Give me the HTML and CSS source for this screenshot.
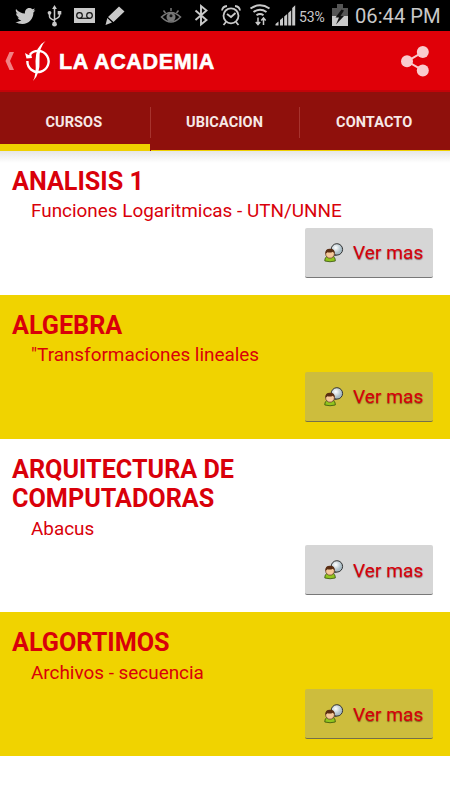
FILE: index.html
```html
<!DOCTYPE html>
<html lang="es">
<head>
  <meta charset="UTF-8">
  <meta name="viewport" content="width=device-width, initial-scale=1.0">
  <title>La Academia</title>
  <link rel="stylesheet" href="styles.css">
</head>
<body>
  <div class="status-bar">
    <div class="status-left">
      <!-- bird -->
      <svg width="21" height="31" viewBox="15 0 21 31"><path fill="#c9c9c9" d="M16 9c2.500 3 5.500 4.300 9 4.500-.6-3 1.600-5.500 4.200-5.500 1.300 0 2.300.5 3.200 1.300l2.500-.9-1.500 2.300 2-.4-2 2.200c.2 6-4.500 11.500-11 11.500-2.600 0-5-.6-7-1.900 2.200 0 4.300-.6 6-1.800-1.900-.3-3.200-1.300-3.800-2.900h1.700c-2-.7-3.200-2.200-3.200-4.200l1.700.4C16 12.500 15.300 10.800 16 9z"/></svg>
      <!-- usb -->
      <svg width="17" height="31" viewBox="46 0 17 31"><g fill="none" stroke="#c9c9c9" stroke-width="1.500"><path d="M54.500 7v17M49.500 13v3.500q0 2 5 4M59.500 13v2.500q0 2-5 4"/></g><g fill="#c9c9c9"><path d="M54.500 5l2.400 4h-4.800zM57.700 11h3.600v3.600h-3.600z"/><circle cx="49.500" cy="12.800" r="1.900"/><circle cx="54.500" cy="24.200" r="2.400"/></g></svg>
      <!-- voicemail -->
      <svg width="22" height="31" viewBox="73 0 22 31"><path fill="#c9c9c9" d="M74 8h21v15H74z"/><g fill="none" stroke="#111" stroke-width="1.200"><circle cx="79.500" cy="15.500" r="2.800"/><circle cx="89.500" cy="15.500" r="2.800"/><path d="M79.500 18.300h10"/></g></svg>
      <!-- pencil -->
      <svg width="21" height="31" viewBox="105 0 21 31"><path fill="#c9c9c9" d="M119 6.500l5.500 5-11 10.500-5.500-5zM107.300 18l4.700 4.500-6.500 2.500z"/></svg>
    </div>
    <div class="status-right">
      <!-- eye -->
      <svg width="30" height="31" viewBox="158 0 30 31"><path d="M161.500 17q9.500-9 19 0-9.500 10-19 0z" fill="none" stroke="#777" stroke-width="1.600"/><circle cx="171" cy="17" r="4.500" fill="#777"/><circle cx="171" cy="15.800" r="1.500" fill="#111"/><path d="M171 8v3M163.500 10.500l2 2.500M178.500 10.500l-2 2.500" stroke="#777" stroke-width="1.500"/></svg>
      <!-- bluetooth -->
      <svg width="27" height="31" viewBox="188 0 27 31"><path d="M195.500 10.500l11 9.500-5.500 4.500V6l5.500 4.500-11 9.500" fill="none" stroke="#c9c9c9" stroke-width="1.900"/></svg>
      <!-- alarm -->
      <svg width="31" height="31" viewBox="215 0 31 31"><g fill="none" stroke="#c9c9c9" stroke-width="1.800"><circle cx="231" cy="15.800" r="7.500"/><path d="M227 14l4 3 4.500-4M222 10.500q.5-4 5-4.500M240 10.500q-.5-4-5-4.500M226 22l-2.500 3M236 22l2.500 3"/></g></svg>
      <!-- wifi -->
      <svg width="27" height="31" viewBox="246 0 27 31"><g fill="none" stroke="#c9c9c9" stroke-width="2"><path d="M250.500 8.500q9.500-6.500 19 0M253.500 12q6.500-4.500 13 0M256.500 15.200q3.500-2.400 7 0"/><path stroke-width="1.500" d="M258 17.500v7M255.800 22l2.200 2.500 2.200-2.500M263.500 25v-7M261.300 20.500l2.200-2.500 2.200 2.500"/></g></svg>
      <!-- signal -->
      <svg width="25" height="31" viewBox="273 0 25 31"><path fill="#c9c9c9" d="M275.500 25.500V24l3-2.500v4zM280 25.500V20l3-2.500v8zM284.200 25.500v-9l3-2.500v11.500zM288.200 25.500V13l3-2.800v15.300zM292.200 25.500V8l3-2.800v20.300z"/></svg>
      <span class="percent">53%</span>
      <!-- battery -->
      <svg width="24" height="31" viewBox="328 0 24 31"><path fill="#555" d="M332 8h5V4h6v4h5v8h-16z"/><path fill="#c9c9c9" d="M332 16h16v10h-16z"/><path fill="#111" d="M341.500 9.500l-6 8h3.500l-3 7 8-8.500h-3.500l3.500-5.500z"/></svg>
      <span class="clock">06:44 PM</span>
    </div>
  </div>

  <header class="action-bar">
    <svg class="back" width="10" height="20" viewBox="0 0 10 20"><path fill="#f28083" d="M4.500 1H9L5 10l4 9H4.500L.5 10z"/></svg>
    <svg class="logo" width="26" height="42" viewBox="24 40 26 42"><path d="M27.400 61a10.600 10.600 0 1 0 2.600-6.500" fill="none" stroke="#fff" stroke-width="2.400"/><path fill="#fff" d="M45.500 41q-6.500 6-6 19 .8 14-6.500 21 3.500-6 2.500-20Q35.500 46 45.500 41zM25 53l1.500 5.500 5.500-.5-1-4.500-2.500 1.500z"/></svg>
    <h1>LA ACADEMIA</h1>
    <svg class="share" width="30" height="32" viewBox="400 45 30 32"><path d="M423 52l-16 9.300 16 9" fill="none" stroke="#f9ccce" stroke-width="2"/><g fill="#f9ccce"><circle cx="422.800" cy="52" r="6"/><circle cx="407" cy="61.300" r="6"/><circle cx="422.800" cy="70.500" r="6"/></g></svg>
  </header>

  <nav class="tabs">
    <a class="tab active" href="#cursos">CURSOS</a>
    <a class="tab" href="#ubicacion">UBICACION</a>
    <a class="tab" href="#contacto">CONTACTO</a>
  </nav>

  <!-- shared icon for the buttons -->
  <svg class="defs" width="0" height="0">
    <defs>
      <radialGradient id="bubble" cx="40%" cy="35%"><stop offset="0" stop-color="#fff"/><stop offset="1" stop-color="#a9bcc5"/></radialGradient>
    </defs>
    <symbol id="person" viewBox="0 0 20 20">
      <path d="M8.500 13.500l1-5 4 3z" fill="#dde5e8" stroke="#222" stroke-width=".8"/>
      <circle cx="12.900" cy="6.400" r="5.700" fill="url(#bubble)" stroke="#333" stroke-width="1"/>
      <path d="M.8 18q0-4.500 3-4.500h4.500q3 0 3 4.500-5.200 1.500-10.500 0z" fill="#91c51e" stroke="#36520b" stroke-width=".8"/>
      <circle cx="6" cy="10.800" r="4.400" fill="#f6c99b" stroke="#5b341b" stroke-width=".7"/>
      <path d="M1.400 11Q.8 5.700 6 5.700q5.200 0 4.800 5.300L9 8.700q-3 1.500-5.500.5z" fill="#5a2d12"/>
    </symbol>
  </svg>

  <main class="courses" id="cursos">
    <section class="course">
      <h2>ANALISIS 1</h2>
      <p>Funciones Logaritmicas - UTN/UNNE</p>
      <button class="more"><svg width="20" height="20"><use href="#person"/></svg>Ver mas</button>
    </section>
    <section class="course yellow">
      <h2>ALGEBRA</h2>
      <p>"Transformaciones lineales</p>
      <button class="more"><svg width="20" height="20"><use href="#person"/></svg>Ver mas</button>
    </section>
    <section class="course">
      <h2>ARQUITECTURA DE COMPUTADORAS</h2>
      <p>Abacus</p>
      <button class="more"><svg width="20" height="20"><use href="#person"/></svg>Ver mas</button>
    </section>
    <section class="course yellow">
      <h2>ALGORTIMOS</h2>
      <p>Archivos - secuencia</p>
      <button class="more"><svg width="20" height="20"><use href="#person"/></svg>Ver mas</button>
    </section>
  </main>
</body>
</html>
```
FILE: styles.css
```css
* {
  box-sizing: border-box;
}
body {
  margin: 0;
  font-family: Roboto, sans-serif;
  background-color: #fff;
  color: #d9000a;
}
svg {
  display: block;
  flex: none;
}
.defs {
  position: absolute;
}
.status-bar {
  display: flex;
  justify-content: space-between;
  height: 31px;
  padding-left: 15px;
  background-color: #000;
  color: #c9c9c9;
}
.status-left {
  display: flex;
  gap: 10px;
}
.status-right {
  display: flex;
  align-items: center;
  width: 292px;
}
.percent {
  width: 30px;
  padding: 2px 0 0 1px;
  font-size: 14px;
  letter-spacing: -0.1px;
}
.clock {
  padding-left: 3px;
  font-size: 20.200px;
  white-space: nowrap;
}
.action-bar {
  display: flex;
  align-items: center;
  height: 61px;
  padding: 1px 20px 0 5px;
  background-color: #e00008;
  border-bottom: 2px solid #c40309;
}
.logo {
  margin-left: 9px;
}
.action-bar h1 {
  margin: 2px auto 0 9px;
  font-family: "Liberation Sans", Arial, sans-serif;
  font-size: 21.500px;
  font-weight: bold;
  letter-spacing: 0.650px;
  color: #fff;
  -webkit-text-stroke: 0.6px #fff;
}
.tabs {
  display: flex;
  height: 59px;
  background-color: #8f100c;
}
.tab {
  position: relative;
  flex: 1;
  padding: 1px 2px 0 0;
  border-bottom: 1px solid #efd000;
  line-height: 59px;
  text-align: center;
  text-decoration: none;
  font-size: 14.500px;
  font-weight: bold;
  letter-spacing: 0.100px;
  color: #f7e9e7;
}
.tab.active {
  border-bottom: 7px solid #efd000;
  margin-right: 1px;
}
/* thin line between the tabs */
.tab + .tab::before {
  content: "";
  position: absolute;
  left: -1px;
  top: 15px;
  width: 1px;
  height: 31px;
  background-color: #a7332e;
}
.course {
  display: flex;
  flex-direction: column;
  padding: 16px 17px 17px 12px;
}
.course:first-child {
  background-image: linear-gradient(#e6e6e6, #fff 12px);
}
.course.yellow {
  background-color: #f0d300;
}
.course h2 {
  max-width: 270px;
  margin: 0;
  font-size: 25.200px;
  font-weight: bold;
  line-height: 29.300px;
}
.course p {
  margin: 0 0 2.700px 19px;
  font-size: 18.900px;
  line-height: 29px;
}
.more {
  display: flex;
  align-items: center;
  align-self: flex-end;
  width: 128px;
  height: 50px;
  padding: 1px 0 0 19px;
  border: 0;
  border-radius: 2px;
  border-bottom: 1px solid rgba(80, 80, 80, 0.7);
  background-color: #d6d6d6;
  font-family: inherit;
  font-size: 19.200px;
  color: #d9000a;
  text-shadow: 0 1px 1px rgba(60, 0, 0, 0.5);
}
.more svg {
  margin-right: 9px;
}
.yellow .more {
  background-color: #cdbd3d;
}
```
